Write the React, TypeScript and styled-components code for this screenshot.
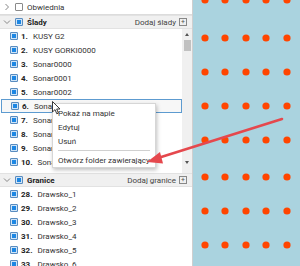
import React from 'react';
import styled, { createGlobalStyle } from 'styled-components';

const GlobalStyle = createGlobalStyle`
  html, body {
    margin: 0;
    padding: 0;
    width: 300px;
    height: 266px;
    overflow: hidden;
    font-family: Roboto, "Liberation Sans", sans-serif;
    color: #333;
  }
`;

const TRACKS = [
  'KUSY G2',
  'KUSY GORKI0000',
  'Sonar0000',
  'Sonar0001',
  'Sonar0002',
  'Sonar0003',
  'Sonar0004',
  'Sonar0005',
  'Sonar0006',
  'Sonar0007',
];

const BORDERS = [
  'Drawsko_1',
  'Drawsko_2',
  'Drawsko_3',
  'Drawsko_4',
  'Drawsko_5',
  'Drawsko_6',
];

// map dots, in map coordinates
const DOT_X = [12, 32, 53, 73, 94];
const DOT_Y = [0, 38, 72, 106, 140, 177, 211, 245];

function Chevron({ open }: { open: boolean }) {
  return (
    <S.Chevron viewBox="0 0 8 8">
      {open ? (
        <polyline points="1,2.5 4,5.5 7,2.5" />
      ) : (
        <polyline points="2.5,1 5.5,4 2.5,7" />
      )}
    </S.Chevron>
  );
}

function SectionHeader({ title, action }: { title: string; action: string }) {
  return (
    <S.Header>
      <Chevron open />
      <S.Check $checked />
      <S.HeaderTitle>{title}</S.HeaderTitle>
      <S.Action>
        {action}
        <S.PlusBox>+</S.PlusBox>
      </S.Action>
    </S.Header>
  );
}

function ItemRow({ no, name, selected }: { no: number; name: string; selected?: boolean }) {
  return (
    <S.Row $selected={selected}>
      <S.Check $checked />
      <S.Num>{no}.</S.Num>
      <span>{name}</span>
    </S.Row>
  );
}

function App() {
  return (
    <S.Screen>
      <GlobalStyle />
      <S.Panel>
        <S.TopRow>
          <Chevron open={false} />
          <S.Check />
          <span>Obwiednia</span>
        </S.TopRow>
        <SectionHeader title="Ślady" action="Dodaj ślady" />
        <S.ScrollArea>
          <S.Viewport>
            {TRACKS.map((t, i) => (
              <ItemRow key={t} no={i + 1} name={t} selected={i === 5} />
            ))}
          </S.Viewport>
          <S.Scrollbar>
            <S.ArrowUp />
            <S.Thumb />
            <S.Spacer />
            <S.ArrowDown />
          </S.Scrollbar>
        </S.ScrollArea>
        <SectionHeader title="Granice" action="Dodaj granice" />
        <S.Rows>
          {BORDERS.map((b, i) => (
            <ItemRow key={b} no={i + 28} name={b} />
          ))}
        </S.Rows>
      </S.Panel>
      <S.Map>
        <svg width="107" height="266">
          {DOT_Y.map(y =>
            DOT_X.map(x => <circle key={`${x}-${y}`} cx={x} cy={y} r={3.6} fill="#ff4500" />),
          )}
        </svg>
      </S.Map>

      <S.Menu>
        <S.MenuItem>Pokaż na mapie</S.MenuItem>
        <S.MenuItem>Edytuj</S.MenuItem>
        <S.MenuItem>Usuń</S.MenuItem>
        <S.Separator />
        <S.MenuItem>Otwórz folder zawierający</S.MenuItem>
      </S.Menu>

      <S.Cursor viewBox="0 0 9 14" width="9" height="14">
        <path
          d="M0.5 0.5 L0.5 11 L3 8.6 L4.8 12.8 L6.4 12.1 L4.7 8 L8 8 Z"
          fill="#fff"
          stroke="#222"
          strokeWidth="0.9"
          strokeLinejoin="round"
        />
      </S.Cursor>

      <S.Overlay width="300" height="266">
        <line x1="282" y1="119" x2="158" y2="158" stroke="#e5484d" strokeWidth="2.6" strokeLinecap="round" />
        <polygon points="147,162 160,152 163,163.5" fill="#e5484d" />
      </S.Overlay>
    </S.Screen>
  );
}

const S = {
  Screen: styled.div`
    position: relative;
    width: 300px;
    height: 266px;
    display: flex;
    overflow: hidden;
    font-size: 8px;
  `,
  Panel: styled.div`
    width: 193px;
    flex-shrink: 0;
    display: flex;
    flex-direction: column;
    background: #fff;
    border-right: 1px solid #cfcfcf;
    box-sizing: border-box;
  `,
  TopRow: styled.div`
    height: 15px;
    flex-shrink: 0;
    display: flex;
    align-items: center;
    gap: 4px;
    padding-left: 3px;
    border-bottom: 1px solid #dcdcdc;
    box-sizing: border-box;
  `,
  Chevron: styled.svg`
    width: 8px;
    height: 8px;
    fill: none;
    stroke: #888;
    stroke-width: 1;
    flex-shrink: 0;
  `,
  Check: styled.span<{ $checked?: boolean }>`
    width: 8px;
    height: 8px;
    flex-shrink: 0;
    box-sizing: border-box;
    border: 1px solid ${p => (p.$checked ? '#5a8cbf' : '#8a8a8a')};
    border-radius: 1px;
    background: ${p => (p.$checked ? '#1c86e3' : '#fff')};
    box-shadow: ${p => (p.$checked ? 'inset 0 0 0 1px #cfe4f7' : 'none')};
  `,
  Header: styled.div`
    height: 14px;
    flex-shrink: 0;
    display: flex;
    align-items: center;
    gap: 4px;
    padding: 0 5px 0 3px;
    background: #f0f0f0;
    border-top: 1px solid #e2e2e2;
    border-bottom: 1px solid #e2e2e2;
    box-sizing: border-box;
  `,
  HeaderTitle: styled.span`
    font-weight: 700;
    color: #222;
  `,
  Action: styled.span`
    margin-left: auto;
    display: flex;
    align-items: center;
    gap: 3px;
    color: #444;
  `,
  PlusBox: styled.span`
    width: 8px;
    height: 8px;
    box-sizing: border-box;
    border: 1px solid #888;
    display: flex;
    align-items: center;
    justify-content: center;
    font-size: 7px;
    line-height: 1;
    color: #555;
  `,
  ScrollArea: styled.div`
    height: 144px;
    display: flex;
    flex-shrink: 0;
  `,
  Viewport: styled.div`
    flex: 1;
    overflow: hidden;
    display: flex;
    flex-direction: column;
  `,
  Rows: styled.div`
    display: flex;
    flex-direction: column;
  `,
  Row: styled.div<{ $selected?: boolean }>`
    height: 14px;
    flex-shrink: 0;
    display: flex;
    align-items: center;
    padding-left: ${p => (p.$selected ? 9 : 10)}px;
    margin-left: ${p => (p.$selected ? 1 : 0)}px;
    box-sizing: border-box;
    border: ${p => (p.$selected ? '1px solid #5d9bd0' : 'none')};
    background: ${p => (p.$selected ? '#f7f7f7' : 'transparent')};
    color: #333;
    white-space: nowrap;
  `,
  Num: styled.span`
    font-weight: 700;
    margin: 0 5px 0 3px;
    color: #222;
  `,
  Scrollbar: styled.div`
    width: 10px;
    background: #f0f0f0;
    display: flex;
    flex-direction: column;
    align-items: center;
    padding: 4px 0 9px;
    box-sizing: border-box;
  `,
  ArrowUp: styled.span`
    width: 0;
    height: 0;
    border-left: 2.5px solid transparent;
    border-right: 2.5px solid transparent;
    border-bottom: 3px solid #555;
  `,
  ArrowDown: styled.span`
    width: 0;
    height: 0;
    border-left: 2.5px solid transparent;
    border-right: 2.5px solid transparent;
    border-top: 3px solid #555;
  `,
  Thumb: styled.span`
    width: 7px;
    height: 11px;
    margin-top: 4px;
    background: #c1c1c1;
  `,
  Spacer: styled.span`
    flex: 1;
  `,
  Map: styled.div`
    flex: 1;
    background: #aad3df;
    line-height: 0;
  `,
  Menu: styled.div`
    position: absolute;
    left: 52px;
    top: 103px;
    width: 104px;
    padding: 2px 0 0;
    box-sizing: border-box;
    background: #fff;
    border: 1px solid #d6d6d6;
    box-shadow: 1px 2px 4px rgba(0, 0, 0, 0.25);
    display: flex;
    flex-direction: column;
  `,
  MenuItem: styled.div`
    height: 14px;
    display: flex;
    align-items: center;
    padding-left: 5px;
    color: #333;
    white-space: nowrap;
  `,
  Separator: styled.div`
    height: 1px;
    margin: 2px 5px 2px 5px;
    background: #d0d0d0;
  `,
  Cursor: styled.svg`
    position: absolute;
    left: 52px;
    top: 101px;
  `,
  Overlay: styled.svg`
    position: absolute;
    left: 0;
    top: 0;
    pointer-events: none;
  `,
};

export default App;
